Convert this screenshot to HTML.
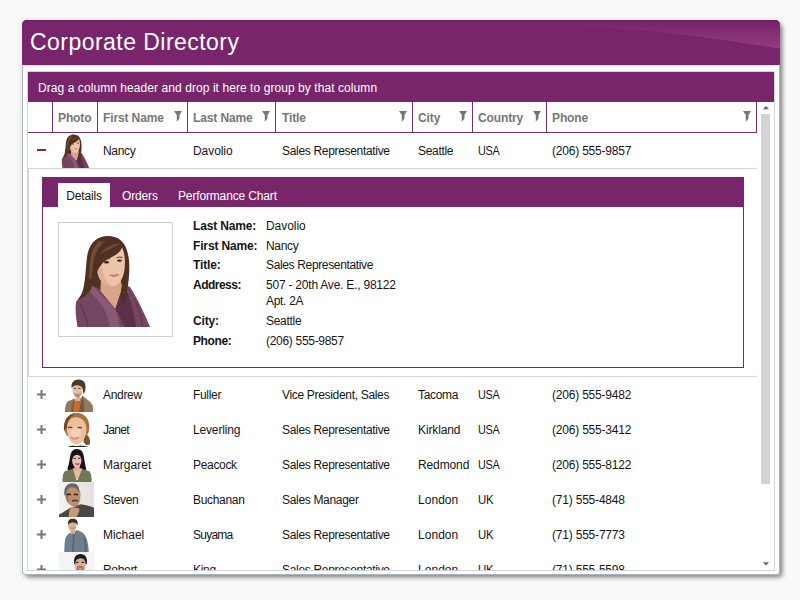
<!DOCTYPE html>
<html><head><meta charset="utf-8"><title>Corporate Directory</title>
<style>
*{box-sizing:border-box;margin:0;padding:0}
html,body{width:800px;height:600px;overflow:hidden;background:#f9f9f9;font-family:"Liberation Sans",sans-serif;font-size:12px;color:#151515}
.abs{position:absolute}
#win{position:absolute;left:22px;top:20px;width:758px;height:555px;background:#fff;border-radius:5px 5px 4px 4px;box-shadow:inset 0 0 0 1px #a6b5be,3px 3px 5px -1px rgba(0,0,0,.5),0 0 0 1px rgba(255,255,255,.45),0 0 5px 0 rgba(0,0,0,.13)}
#tbar{position:absolute;left:0;top:0;width:758px;height:45px;background:#79256b;box-shadow:inset 0 1px 0 #6e1a62,0 1px 0 #dbe4e9;border-radius:5px 5px 0 0;overflow:hidden}
#tbar h1{position:absolute;left:8px;top:8px;font-size:23px;letter-spacing:.46px;font-weight:normal;color:#fff;white-space:nowrap;line-height:28px}
#grid{position:absolute;left:5px;top:51px;width:748px;height:500px;border:1px solid #d6d4d5;overflow:hidden;background:#fff}
#gp{position:absolute;left:0;top:0;width:746px;height:30px;background:#79256b;color:#fff;line-height:32px;padding-left:10px;white-space:nowrap;letter-spacing:.07px}
#hdr{position:absolute;left:0;top:30px;width:729px;height:31px;border-bottom:1px solid #7e2b71;border-right:1px solid #7e2b71}
.sep{position:absolute;top:0;width:1px;height:30px;background:#7e2b71}
.h{position:absolute;top:1px;line-height:30px;letter-spacing:-.12px;font-weight:bold;color:#767676;white-space:nowrap}
.f{position:absolute;top:9px;width:8px;height:11px}
.row{position:absolute;left:0;width:729px;height:35px}
.row span{position:absolute;top:1px;line-height:35px;white-space:nowrap;letter-spacing:-.32px}
.row span.c6{letter-spacing:-.2px}
.c1{left:75px}.c2{left:165px}.c3{left:254px}.c4{left:390px}.c5{left:450px}.c6{left:524px}
.ph{position:absolute;left:31px;top:0;width:35px;height:35px}
.plus{position:absolute;left:9px;top:13px;width:9px;height:9px}
.minus{position:absolute;left:9px;top:16px;width:9px;height:2px;background:#79256b}
.hl{position:absolute;left:0;width:729px;height:1px;background:#d6d4d5}
#det{position:absolute;left:14px;top:105px;width:702px;height:191px;border:1px solid #79256b;background:#fff}
#tabs{position:absolute;left:0;top:0;width:700px;height:29px;background:#79256b;color:#fff}
#tabs span{position:absolute;top:6px;height:24px;line-height:24px;white-space:nowrap;letter-spacing:-.15px}
#tabs .on{background:#fff;color:#151515;left:15px;width:52px;text-align:center;top:5px;height:25px;line-height:26px}
#frame{position:absolute;left:15px;top:44px;width:115px;height:115px;border:1px solid #cfcfcf;background:#fff}
.dl{position:absolute;left:150px;font-weight:bold;white-space:nowrap;line-height:16px;letter-spacing:-.15px}
.dv{position:absolute;left:223px;white-space:nowrap;line-height:16px;letter-spacing:-.3px}
#sb{position:absolute;left:730px;top:30px;width:16px;height:468px;background:#fff}
#thumb{position:absolute;left:3px;top:12px;width:9px;height:370px;background:#d4d2d3}
</style></head><body>
<svg width="0" height="0" style="position:absolute">
<defs>
<symbol id="fl" viewBox="0 0 8 11"><polygon points="0,0 8,0 5.500,4 5.500,7.500 2.800,10.800 2.800,4" fill="#747474"/></symbol>

<symbol id="pl" viewBox="0 0 9 9"><path d="M0 3.500h9v2h-9ZM3.500 0h2v9h-2Z" fill="#767676"/></symbol>
<symbol id="p1" viewBox="0 0 95 95">
 <path d="M39.500 4C30 4 22 10 19.500 22C17.500 34 18 46 15 58C13.500 63 11 66 9.500 68L22 73L50 80L56 74C58.500 66 60 56 61 44C62 32 61 20 56 12C52 6 46 4 39.500 4Z" fill="#4f3021"/>
 <path d="M31 9C24 15 21.500 26 21.500 40C21 50 19 58 16 63C22 54 24 44 25 34C26 24 29 15 37 10Z" fill="#7d5539" opacity=".75"/>
 <path d="M33 46L32 66L47.500 77L54.500 56L52 46Z" fill="#d7a689"/>
 <path d="M29.500 30C28 38 30 46 34 50C38 54 43 55.300 47 54C52 52 55 46 56.500 38C57.500 30 57 22 54 15C46 16 36 20 29.500 30Z" fill="#ecc4ab"/>
 <path d="M30 32C29 39 31 46 34 50C37 53 41 54.500 44 54.500C38 50 34 42 33.500 32Z" fill="#d9a98e" opacity=".7"/>
 <path d="M54.500 11C46 8 34 13 29 24C27 30 27 36 28.500 42C31 33 37 28 44 25C50 22 55 18 54.500 11Z" fill="#4f3021"/>
 <path d="M52 12C45 11 37 15 32 23C38 18 45 16 52 12Z" fill="#7d5539" opacity=".7"/>
 <ellipse cx="38.500" cy="30.300" rx="2.600" ry="1.200" fill="#3b261b"/><ellipse cx="51.500" cy="28.600" rx="2.400" ry="1.200" fill="#3b261b"/>
 <path d="M34.500 27.500q4-2.200 7.500-.5M48.500 25.800q3-1.500 6-.3" stroke="#5a3a28" stroke-width="1" fill="none"/>
 <path d="M41.500 43q5 3.200 9.500-.6q-4.500 1-9.500 .6Z" fill="#c9786c" stroke="#c9786c" stroke-width=".9"/>
 <path d="M8 70C12 64 18 58 24 53.500L30 56L47.500 77L55.500 52L62 55C68 64 76 80 82 95L9.500 95C8 86 7 78 8 70Z" fill="#754662"/>
 <path d="M24 53.500L47.500 77L52 95L42 95C40 82 33 68 21 60Z" fill="#8a5a74"/>
 <path d="M55.500 52L47.500 77L57 95L68 95C66 80 62 64 55.500 52Z" fill="#5b3048"/>
 <path d="M12 72q6 10 8 23M66 66q6 12 9 29" stroke="#5b3048" stroke-width="1.500" fill="none" opacity=".6"/>
 <path d="M57 36C59.500 44 60 54 58.500 63C57.800 68 56.500 72 55 74.500C53.500 70 52.500 64 53 58C54 52 56 46 57 36Z" fill="#4f3021"/>
 <path d="M19 44C18.500 52 16.500 58 13.500 63L10.500 67.500C15 66 20 62 23 57.500C24.500 53 24 48 19 44Z" fill="#4f3021"/>
</symbol>
<symbol id="p2" viewBox="0 0 35 35">
 <path d="M5.800 35C6 30 7 26.500 8.500 24.500L15.500 21.500L17 24L20 24L23.300 18.700C27 21 32 25 33.800 28.500L34 35Z" fill="#8f7a5c"/>
 <path d="M15.200 24L15 35L19.500 35L19.800 24Z" fill="#e5631a"/>
 <path d="M23.300 19L20 35L25 35C25.500 29 25 23 23.300 19Z" fill="#6d5b43"/>
 <path d="M15.500 21.500L14.500 35L12 35C12 30 13 25 15.500 21.500Z" fill="#76644b"/>
 <path d="M16.500 18h4.500v6h-4.500Z" fill="#d9b198"/>
 <path d="M13.400 13C13 8 15 6 18.500 6C22 6 23.800 8.500 23.500 13C23.300 17 21 20 18.500 20C16 20 13.800 17 13.400 13Z" fill="#e3bda5"/>
 <path d="M14.500 15.500C16 17.500 21 17.500 22.800 15C22.500 18 20.500 20 18.500 20C16.500 20 15 18 14.500 15.500Z" fill="#a79383"/>
 <path d="M12.500 11C12 5.500 15 2.600 19.500 2.600C24 2.600 26.800 5.500 26.500 10C26.500 13 26 15.500 24.500 17L23.500 11C22 8.500 19 7.800 16 8.500C14.500 9 13.500 10 12.500 11Z" fill="#4b392a"/>
 <path d="M14.800 11.300h2.300M19 11.300h2.500" stroke="#4a3628" stroke-width=".9"/>
</symbol>
<symbol id="p3" viewBox="0 0 35 35">
 <path d="M25 22C29 22 31.500 26 31 32.500L27 33L24.500 30Z" fill="#7a5230"/>
 <path d="M5 18C4 8 9 1 18 .9C26 1 30.500 7 30.300 15C30.300 19 29 22 27.400 24L8 24Z" fill="#a87238"/>
 <path d="M5 18C4.500 9 9 2 17 1C11 4 8 9 8 16Z" fill="#6f4726"/>
 <path d="M7.900 17C7.900 10 11 5.300 17 5.300C23 5.500 27.400 10 27.400 17C27.400 24 23.500 32.700 17.500 32.700C12 32.700 7.900 24 7.900 17Z" fill="#ebbf9f"/>
 <ellipse cx="17" cy="21" rx="5" ry="6" fill="#f6d8c2" opacity=".7"/>
 <path d="M9 15.800q2-1.200 4.200 0M18.500 16q2-1.300 4.300 0" stroke="#5a3a28" stroke-width="1.300" fill="none"/>
 <path d="M11.700 25.500q4 3.500 8.200 0q-4 1.200-8.200 0Z" fill="#f3d9d0" stroke="#c77f72" stroke-width=".9"/>
 <path d="M9 35q2-1.500 5-1.500q3.500 1 7 0q5 0 9 1.500Z" fill="#2a2628"/>
</symbol>
<symbol id="p4" viewBox="0 0 35 35">
 <path d="M8.200 22.500C10 18 10.500 12 11.700 7C13 3 15.500 2 18 2C21.500 2 23.800 4 24.500 8C25.500 13 26 18 27.400 22.500L22 24L13 24Z" fill="#17131a"/>
 <path d="M3.500 35C3.500 29 4.200 26 6 24.300L13.500 21.800L22.500 21.800L30.500 24.300C32 26 32.700 30 32.700 35Z" fill="#6f7857"/>
 <path d="M13.800 21.500L17.300 33L18.800 33L23.300 21.500Z" fill="#e6bba4"/>
 <path d="M17.300 32l.7 1.800l.8-1.800Z" fill="#f4f2f0"/>
 <path d="M15.300 17h5.500v6h-5.500Z" fill="#dcab92"/>
 <ellipse cx="17.800" cy="13.200" rx="4.700" ry="7.300" fill="#eac0aa"/>
 <path d="M12.800 13C12.500 8 14.500 4.800 18 4.800C21.500 4.800 23 8 22.800 13C22 9.500 20.500 8 18 7.800C15.500 8 13.800 9.500 12.800 13Z" fill="#17131a"/>
 <path d="M14.600 11.400h2.200M19.200 11.400h2.200" stroke="#2a1c1c" stroke-width="1"/>
 <path d="M16.300 16.800q1.900 1.400 4 0q-2 .5-4 0Z" fill="#b8304a" stroke="#b8304a" stroke-width=".8"/>
</symbol>
<symbol id="p5" viewBox="0 0 35 35">
 <linearGradient id="g5" x1="0" x2="1" y1="0" y2="0"><stop offset="0" stop-color="#f5f2f0"/><stop offset="1" stop-color="#e5e0dd"/></linearGradient>
 <rect width="35" height="35" fill="url(#g5)"/>
 <path d="M0 35L0 32.500C4 30.500 8 28 11 26L21.600 22.200C26 22.500 31 24 35 25.700L35 35Z" fill="#4a4643"/>
 <path d="M6.400 12C6.400 7 9 4.500 13.500 4.500C18.500 4.500 21.600 7.500 21.600 12.500L21 19C20 22.500 17.500 24.500 15.500 24.500C12 24.500 8.500 21 7.300 17Z" fill="#bd8f71"/>
 <path d="M6.400 12C6.400 15 7.300 19 9.500 22C9 18 9 14 10.500 10Z" fill="#8e6650" opacity=".8"/>
 <path d="M5.500 13.400C4 6 8 1.200 13.500 1.200C18.500 1.200 21 5 19.800 10.500C18.500 7 16.500 5.300 13 5.300C9.500 5.500 7.500 8 6.800 13.400Z" fill="#6a6562"/>
 <path d="M8 12.800q2-1.200 4 0M14.800 12.800q2-1.200 4.200 0" stroke="#2e221c" stroke-width="1.400" fill="none"/>
 <path d="M13 18.300q3-1.500 6 0l0 1.500q-3-1-6 0Z" fill="#4e3d35"/>
 <path d="M12.500 22q3.500 1.500 7.300-.3l-.8 2.300q-3 1.600-6 0Z" fill="#9a918b"/>
 <path d="M10 35C9.500 30 10.500 26.500 13 25L20.400 26.500C20.800 29 19 32 17.500 35Z" fill="#c89a7c"/>
</symbol>
<symbol id="p6" viewBox="0 0 35 35">
 <path d="M5.200 35C5.500 28 5.800 23.500 6.400 21C8 18 9.500 16.800 11 15.800L14 17L17.500 13.100C21 14 23.500 15.500 25 17C27.500 20 28.600 24 28.600 25.700C29.300 29 29.800 32 29.800 35Z" fill="#6d7e8c"/>
 <path d="M14 17L13 35L15 35L15.500 18ZM24 20q2.500 7 2 15l1.500 0q.8-8-2-15Z" fill="#57656f"/>
 <path d="M11.700 12h4.100v5h-4.100Z" fill="#d3a78b"/>
 <ellipse cx="13.400" cy="8.500" rx="4.200" ry="5.500" fill="#deb296"/>
 <path d="M9 8C8.500 3.500 10.500 1.700 14 1.750C17.500 1.800 19.300 4 18.500 8.500C17.500 6 16.500 5.300 13.500 5.500C11 5.600 9.800 6.500 9 8Z" fill="#3f2c1f"/>
 <path d="M11.500 11q2 1.500 4 0q-2 .3-4 0Z" fill="#fff" stroke="#a86a58" stroke-width=".6"/>
</symbol>
<symbol id="p7" viewBox="0 0 35 35">
 <rect width="35" height="35" fill="#f3f4f6"/>
 <path d="M16 11C16 7 18 4.500 21.500 4.500C25 4.500 26.500 7 26.500 11L26.200 17C25.500 20.500 23.500 22.500 21.300 22.500C19 22.500 16.800 20.500 16.200 17Z" fill="#ddb197"/>
 <path d="M15.300 12.600C14.200 5.500 17 2.100 21.500 2.100C26 2.100 29 5.500 27.700 12.600L26.500 12C26.500 8.500 25 6.500 21.500 6.300C18 6.500 16.300 8.500 16.300 12Z" fill="#1c191a"/>
 <path d="M17.100 10.400h2.400M22.500 10.400h2.700" stroke="#2a3550" stroke-width="1.300"/>
 <path d="M18 14.600q3.300-1.600 6.500 0l0 3.400h-6.500Z" fill="#8a6a58" opacity=".75"/>
 <path d="M20 16.200h2.800v1.300h-2.800Z" fill="#e59a98"/>
</symbol>
</defs>
</svg>
<div id="win">
 <div id="tbar">
  <svg class="abs" style="left:0;top:0" width="758" height="45"><defs><linearGradient id="gl" gradientUnits="userSpaceOnUse" x1="0" y1="3" x2="0" y2="30"><stop offset="0" stop-color="#b55597" stop-opacity="0"/><stop offset="1" stop-color="#b55597" stop-opacity=".5"/></linearGradient></defs><path d="M540 0L758 0L758 28.600C690 18 620 7 540 6Z" fill="url(#gl)"/></svg>
  <h1>Corporate Directory</h1>
 </div>
 <div id="grid">
  <div id="gp">Drag a column header and drop it here to group by that column</div>
  <div id="hdr">
   <i class="sep" style="left:24px"></i><i class="sep" style="left:69px"></i><i class="sep" style="left:159px"></i><i class="sep" style="left:247px"></i><i class="sep" style="left:384px"></i><i class="sep" style="left:444px"></i><i class="sep" style="left:518px"></i>
   <span class="h" style="left:30px">Photo</span>
   <span class="h" style="left:75px">First Name</span>
   <span class="h" style="left:165px">Last Name</span>
   <span class="h" style="left:254px">Title</span>
   <span class="h" style="left:390px">City</span>
   <span class="h" style="left:450px">Country</span>
   <span class="h" style="left:524px">Phone</span>
   <svg class="f" style="left:146px"><use href="#fl"/></svg>
   <svg class="f" style="left:234px"><use href="#fl"/></svg>
   <svg class="f" style="left:371px"><use href="#fl"/></svg>
   <svg class="f" style="left:431px"><use href="#fl"/></svg>
   <svg class="f" style="left:505px"><use href="#fl"/></svg>
   <svg class="f" style="left:715px"><use href="#fl"/></svg>
  </div>
  <div class="row" style="top:61px"><i class="minus"></i><svg class="ph"><use href="#p1"/></svg><span class="c1">Nancy</span><span class="c2" style="letter-spacing:-0.07px">Davolio</span><span class="c3">Sales Representative</span><span class="c4">Seattle</span><span class="c5" style="transform:scaleX(.905);transform-origin:0 50%">USA</span><span class="c6">(206) 555-9857</span></div>
  <i class="hl" style="top:96px"></i>
  <div id="det">
   <div id="tabs"><span class="on">Details</span><span style="left:79px">Orders</span><span style="left:135px">Performance Chart</span></div>
   <div id="frame"><svg class="abs" style="left:9px;top:9px" width="95" height="95"><use href="#p1"/></svg></div>
   <span class="dl" style="top:40px">Last Name:</span><span class="dv" style="top:40px;letter-spacing:-.05px">Davolio</span>
   <span class="dl" style="top:60px">First Name:</span><span class="dv" style="top:60px">Nancy</span>
   <span class="dl" style="top:79px">Title:</span><span class="dv" style="top:79px;letter-spacing:-.35px">Sales Representative</span>
   <span class="dl" style="top:99px;letter-spacing:-.52px">Address:</span><span class="dv" style="top:99px"><span style="letter-spacing:-.22px">507 - 20th Ave. E., 98122</span><br>Apt. 2A</span>
   <span class="dl" style="top:135px">City:</span><span class="dv" style="top:135px">Seattle</span>
   <span class="dl" style="top:155px;letter-spacing:-.39px">Phone:</span><span class="dv" style="top:155px">(206) 555-9857</span>
  </div>
  <i class="hl" style="top:304px"></i><i class="abs" style="left:0;top:97px;width:1px;height:207px;background:#d6d4d5"></i>
  <div class="row" style="top:305px"><svg class="plus"><use href="#pl"/></svg><svg class="ph"><use href="#p2"/></svg><span class="c1">Andrew</span><span class="c2">Fuller</span><span class="c3">Vice President, Sales</span><span class="c4">Tacoma</span><span class="c5" style="transform:scaleX(.905);transform-origin:0 50%">USA</span><span class="c6">(206) 555-9482</span></div>
  <div class="row" style="top:340px"><svg class="plus"><use href="#pl"/></svg><svg class="ph"><use href="#p3"/></svg><span class="c1" style="letter-spacing:-0.69px">Janet</span><span class="c2" style="letter-spacing:-0.16px">Leverling</span><span class="c3">Sales Representative</span><span class="c4" style="letter-spacing:-0.12px">Kirkland</span><span class="c5" style="transform:scaleX(.905);transform-origin:0 50%">USA</span><span class="c6">(206) 555-3412</span></div>
  <div class="row" style="top:375px"><svg class="plus"><use href="#pl"/></svg><svg class="ph"><use href="#p4"/></svg><span class="c1" style="letter-spacing:0.05px">Margaret</span><span class="c2">Peacock</span><span class="c3">Sales Representative</span><span class="c4" style="letter-spacing:-0.12px">Redmond</span><span class="c5" style="transform:scaleX(.905);transform-origin:0 50%">USA</span><span class="c6">(206) 555-8122</span></div>
  <div class="row" style="top:410px"><svg class="plus"><use href="#pl"/></svg><svg class="ph"><use href="#p5"/></svg><span class="c1">Steven</span><span class="c2">Buchanan</span><span class="c3">Sales Manager</span><span class="c4" style="letter-spacing:0.04px">London</span><span class="c5" style="transform:scaleX(.95);transform-origin:0 50%">UK</span><span class="c6">(71) 555-4848</span></div>
  <div class="row" style="top:445px"><svg class="plus"><use href="#pl"/></svg><svg class="ph"><use href="#p6"/></svg><span class="c1" style="letter-spacing:-0.02px">Michael</span><span class="c2" style="letter-spacing:-0.76px">Suyama</span><span class="c3">Sales Representative</span><span class="c4" style="letter-spacing:0.04px">London</span><span class="c5" style="transform:scaleX(.95);transform-origin:0 50%">UK</span><span class="c6">(71) 555-7773</span></div>
  <div class="row" style="top:480px"><svg class="plus"><use href="#pl"/></svg><svg class="ph"><use href="#p7"/></svg><span class="c1">Robert</span><span class="c2">King</span><span class="c3">Sales Representative</span><span class="c4" style="letter-spacing:0.04px">London</span><span class="c5" style="transform:scaleX(.95);transform-origin:0 50%">UK</span><span class="c6">(71) 555-5598</span></div>
  <div id="sb"><i class="abs" id="thumb"></i>
   <svg class="abs" style="left:4px;top:4px" width="8" height="4"><polygon points="0.8,3.2 4,0 7.2,3.2" fill="#666"/></svg>
   <svg class="abs" style="left:4px;top:460px" width="8" height="4"><polygon points="0.8,0.300 7.200,0.300 4,3.500" fill="#666"/></svg>
  </div>
 </div>
</div>
</body></html>
